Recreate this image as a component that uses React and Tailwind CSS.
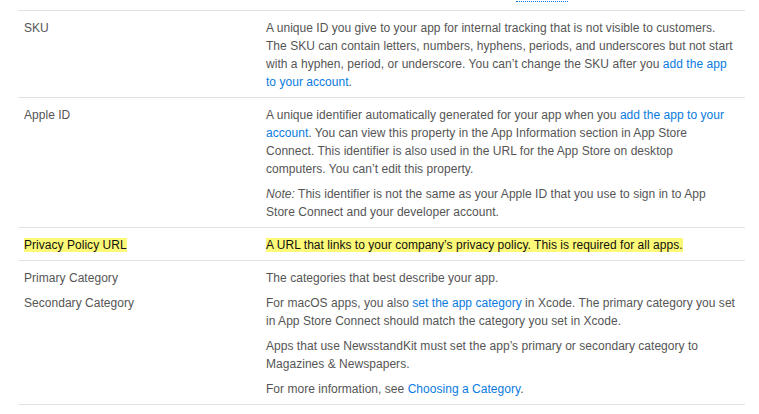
const A = ({ children }) => (
  <a className="text-[#0a7be0] no-underline">{children}</a>
)

const rows = [
  {
    label: 'SKU',
    body: [
      <>
        A unique ID you give to your app for internal tracking that is not visible to customers.
        <br />
        The SKU can contain letters, numbers, hyphens, periods, and underscores but not start
        <br />
        with a hyphen, period, or underscore. You can’t change the SKU after you{' '}
        <A>
          add the app
          <br />
          to your account
        </A>
        .
      </>,
    ],
  },
  {
    label: 'Apple ID',
    body: [
      <>
        A unique identifier automatically generated for your app when you{' '}
        <A>
          add the app to your
          <br />
          account
        </A>
        . You can view this property in the App Information section in App Store
        <br />
        Connect. This identifier is also used in the URL for the App Store on desktop
        <br />
        computers. You can’t edit this property.
      </>,
      <>
        <em>Note:</em> This identifier is not the same as your Apple ID that you use to sign in to
        App
        <br />
        Store Connect and your developer account.
      </>,
    ],
  },
  {
    label: 'Privacy Policy URL',
    highlight: true,
    body: ['A URL that links to your company’s privacy policy. This is required for all apps.'],
  },
]

function Row({ label, body, highlight }) {
  return (
    <div className="flex border-b border-[#e2e2e2]">
      <div className="w-[242px] shrink-0 px-[6px] pt-[8px] pb-[6px]">
        {highlight ? <span className="bg-[#fdf978] text-[#111]">{label}</span> : label}
      </div>
      <div className="flex-1 px-[6px] pt-[8px] pb-[6px] flex flex-col gap-[7px] whitespace-nowrap">
        {body.map((p, i) => (
          <p key={i}>
            {highlight ? <span className="bg-[#fdf978] text-[#111]">{p}</span> : p}
          </p>
        ))}
      </div>
    </div>
  )
}

export default function App() {
  return (
    <div className="w-[759px] h-[414px] bg-white overflow-hidden font-['Liberation_Sans',Arial,sans-serif] text-[12px] leading-[18px] tracking-[0.035px] text-[#555]">
      <div className="relative h-[10px]">
        <div className="absolute left-[516px] top-[1px] w-[52px] border-t border-dotted border-[#0a7be0]" />
      </div>
      <div className="mx-[18px] w-[727px] border-t border-[#e2e2e2]">
        {rows.map((r) => (
          <Row key={r.label} {...r} />
        ))}
        <div className="flex border-b border-[#e2e2e2]">
          <div className="w-[242px] shrink-0 px-[6px] pt-[8px] pb-[6px] flex flex-col gap-[7px]">
            <p>Primary Category</p>
            <p>Secondary Category</p>
          </div>
          <div className="flex-1 px-[6px] pt-[8px] pb-[6px] flex flex-col gap-[7px] whitespace-nowrap">
            <p>The categories that best describe your app.</p>
            <p>
              For macOS apps, you also <A>set the app category</A> in Xcode. The primary category
              you set
              <br />
              in App Store Connect should match the category you set in Xcode.
            </p>
            <p>
              Apps that use NewsstandKit must set the app’s primary or secondary category to
              <br />
              Magazines &amp; Newspapers.
            </p>
            <p>
              For more information, see <A>Choosing a Category</A>.
            </p>
          </div>
        </div>
      </div>
    </div>
  )
}
